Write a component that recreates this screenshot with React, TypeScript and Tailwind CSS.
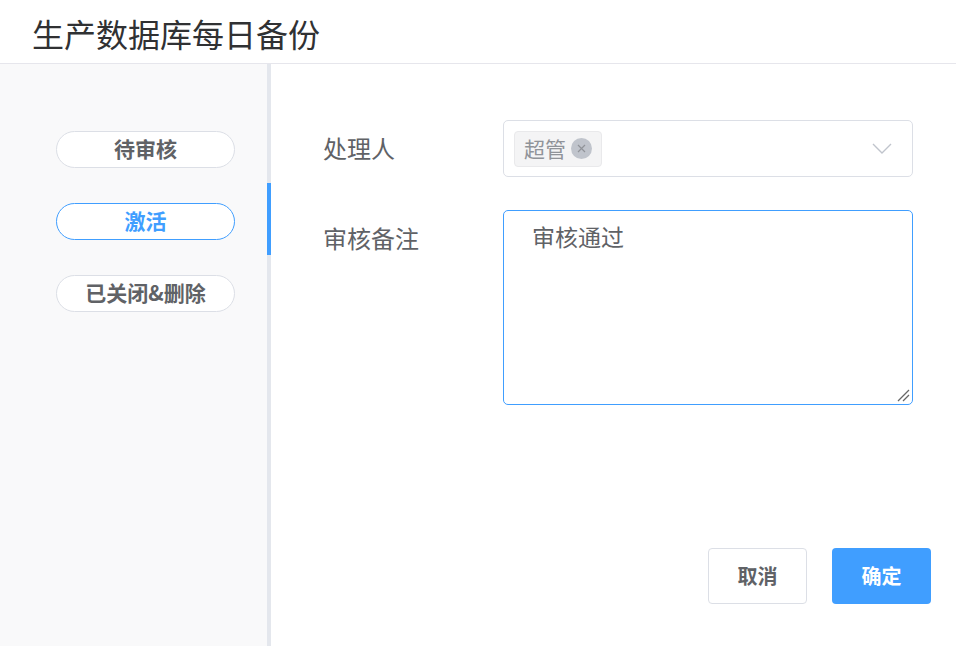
import React from 'react'

const tabs = ['待审核', '激活', '已关闭&删除']

export default function App() {
  const active = 1

  return (
    <div
      className="w-[956px] h-[646px] bg-white flex flex-col overflow-hidden"
      style={{ fontFamily: '"Noto Sans CJK SC", "Noto Sans", sans-serif' }}
    >
      <header className="h-[64px] shrink-0 border-b border-[#e6e6ec] flex items-center pl-[32px]">
        <h1 className="text-[32px] leading-none text-[#303133] pt-[2px]">生产数据库每日备份</h1>
      </header>

      <div className="flex flex-1 min-h-0">
        {/* sidebar tabs */}
        <aside className="w-[271px] shrink-0 bg-[#f9f9fa] flex">
          <div className="flex-1 pt-[49px]">
            {tabs.map((t, i) => (
              <div key={t} className="h-[72px] flex items-center pl-[56px]">
                <div
                  className={
                    'w-[179px] h-[37px] rounded-full bg-white border flex items-center justify-center text-[21px] font-bold ' +
                    (i === active ? 'border-[#409eff] text-[#409eff]' : 'border-[#dcdfe6] text-[#606266]')
                  }
                >
                  {t}
                </div>
              </div>
            ))}
          </div>
          <div className="w-[4px] bg-[#e4e7ed] pt-[119px]">
            <div className="h-[72px] bg-[#409eff]" />
          </div>
        </aside>

        {/* form */}
        <main className="flex-1 flex flex-col pl-[52px] pr-[43px] pt-[56px] pb-[42px]">
          <div className="flex items-center">
            <label className="w-[180px] text-[24px] text-[#606266] pb-[2px]">处理人</label>
            <div className="flex-1 h-[57px] border border-[#dcdfe6] rounded-[5px] flex items-center pl-[10px] pr-[20px]">
              <span className="h-[36px] px-[9px] rounded-[4px] bg-[#f4f4f5] border border-[#e9e9eb] flex items-center gap-[5px] text-[21px] text-[#909399]">
                超管
                <span className="w-[21px] h-[21px] rounded-full bg-[#c0c4cc] flex items-center justify-center">
                  <svg width="11" height="11" viewBox="0 0 11 11" fill="none" stroke="#909399" strokeWidth="1.2">
                    <path d="M2 2L9 9M9 2L2 9" />
                  </svg>
                </span>
              </span>
              <div className="flex-1" />
              <svg width="20" height="11" viewBox="0 0 20 11" fill="none" stroke="#c0c4cc" strokeWidth="1.4">
                <path d="M1 1L10 10L19 1" />
              </svg>
            </div>
          </div>

          <div className="flex mt-[33px]">
            <label className="w-[180px] text-[24px] text-[#606266] pt-[10px]">审核备注</label>
            <div className="flex-1 h-[195px] border border-[#409eff] rounded-[5px] relative pl-[28px] pt-[8px]">
              <span className="text-[23px] text-[#606266]">审核通过</span>
              <svg className="absolute right-[2px] bottom-[2px]" width="13" height="13" viewBox="0 0 13 13" fill="none" stroke="#666" strokeWidth="1.3">
                <path d="M1 12L12 1M6 12L12 6" />
              </svg>
            </div>
          </div>

          <div className="flex-1" />

          <div className="flex justify-end gap-[25px] mr-[-18px]">
            <button className="w-[99px] h-[56px] rounded-[4px] bg-white border border-[#dcdfe6] text-[20px] font-bold text-[#606266]">
              取消
            </button>
            <button className="w-[99px] h-[56px] rounded-[4px] bg-[#409eff] text-[20px] font-bold text-white">
              确定
            </button>
          </div>
        </main>
      </div>
    </div>
  )
}
